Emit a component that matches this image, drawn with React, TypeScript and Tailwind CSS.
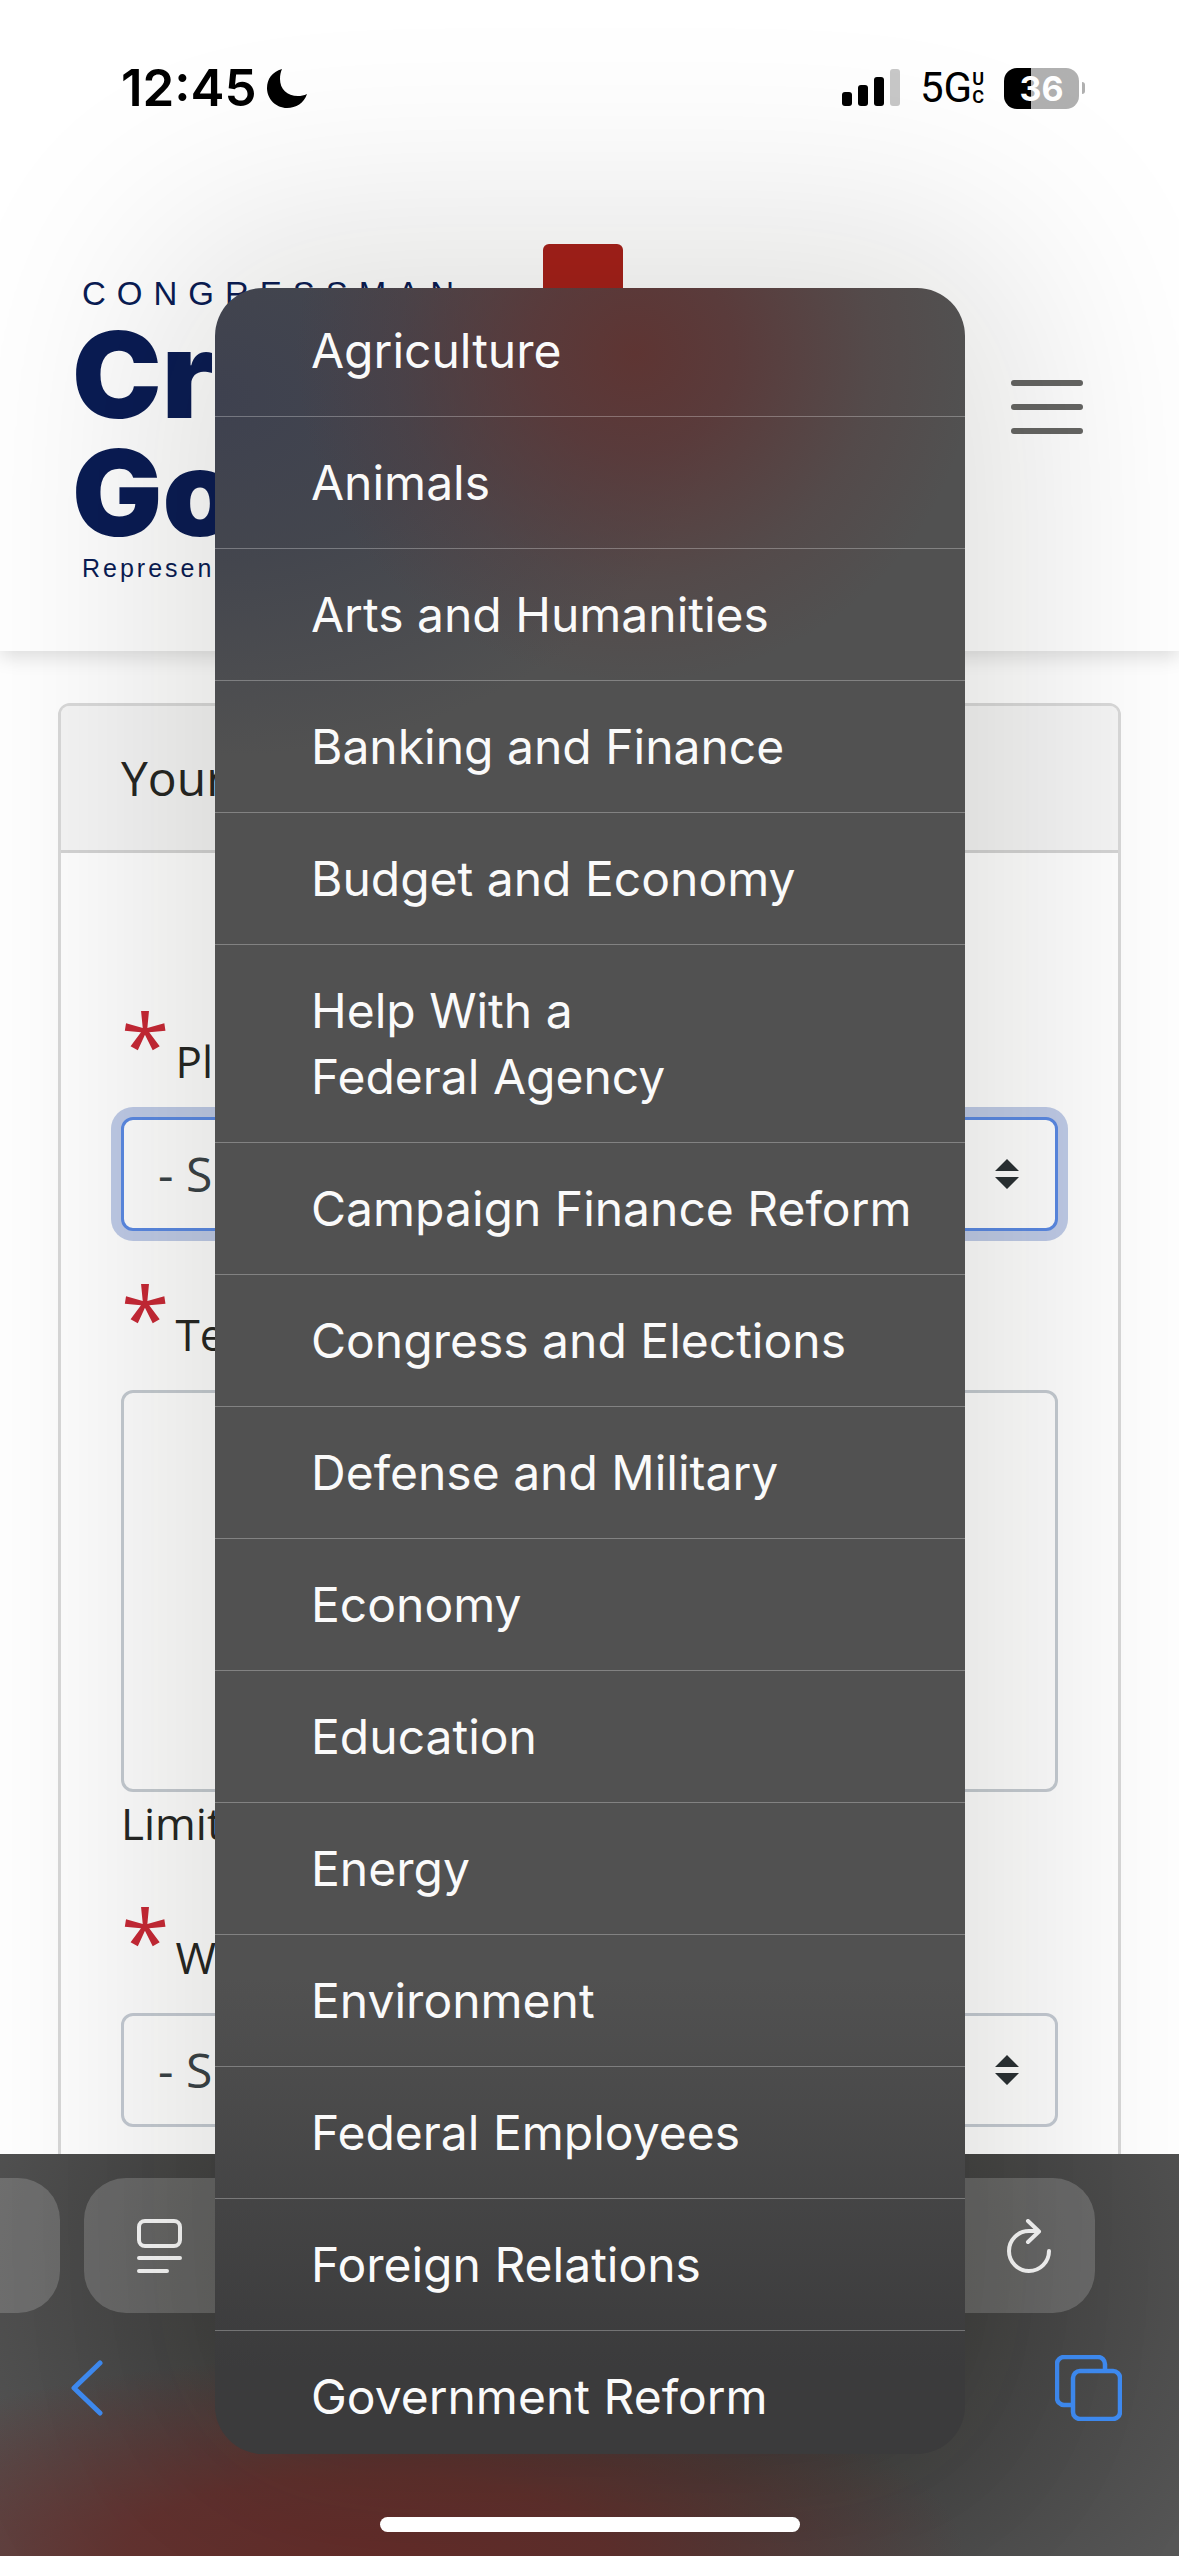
import React from 'react'

const topics = [
  'Agriculture',
  'Animals',
  'Arts and Humanities',
  'Banking and Finance',
  'Budget and Economy',
  'Help With a Federal Agency',
  'Campaign Finance Reform',
  'Congress and Elections',
  'Defense and Military',
  'Economy',
  'Education',
  'Energy',
  'Environment',
  'Federal Employees',
  'Foreign Relations',
  'Government Reform',
]

const StatusBar = () => (
  <div className="flex h-44 shrink-0 items-center justify-between pr-[94px] pl-[121px] text-black">
    <div className="flex items-center gap-2.5">
      <span className="font-['Inter',sans-serif] text-[51px] font-semibold">12:45</span>
      <svg className="h-10 w-10" viewBox="0 0 40 40" aria-hidden="true">
        <path d="M15 1C5 4 0 11 0 20c0 11 9 20 20 20 9 0 17-5 20-14-3 1.500-6 2-9 2-11 0-18-7-18-17 0-4 .7-7 2-10z" fill="#000" />
      </svg>
    </div>
    <div className="flex items-center font-['Roboto',sans-serif]">
      <svg className="h-10 w-[58px]" viewBox="0 0 58 40" aria-hidden="true">
        <rect x="0" y="24" width="10" height="14" rx="3" />
        <rect x="16" y="17" width="10" height="21" rx="3" />
        <rect x="32" y="9" width="10" height="29" rx="3" />
        <rect x="48" y="1" width="10" height="37" rx="3" fill="#c8c8c8" />
      </svg>
      <div className="ml-5 flex items-center">
        <span className="text-[42px] leading-none">5G</span>
        <span className="flex flex-col text-lg leading-[18px] font-semibold">
          <span>U</span>
          <span>C</span>
        </span>
      </div>
      <div className="ml-5 flex items-center gap-[3px]">
        <div className="flex h-[41px] w-[75px] items-center justify-center rounded-[13px] bg-linear-to-r from-black from-36% to-[#b0b0b0] to-36% font-['Inter',sans-serif] text-[34px] font-bold text-white">
          36
        </div>
        <div className="h-3 w-[3px] rounded-r-full bg-[#b0b0b0]" />
      </div>
    </div>
  </div>
)

const Header = () => (
  <header className="flex items-center justify-between bg-white pt-[51px] pr-24 pb-16 pl-15 shadow-[0_6px_18px_rgba(0,0,0,0.13)]">
    <svg className="h-[360px] w-[580px]" viewBox="0 0 580 360" role="img" aria-label="Congressman">
      <g fill="#0a1c54">
        <text x="22" y="78" className="font-['Liberation_Sans',sans-serif] text-[33px] tracking-[11px]">CONGRESSMAN</text>
        <text x="12" y="191" className="font-['Inter',sans-serif] text-[120px] font-black">Cr</text>
        <text x="12" y="309" className="font-['Inter',sans-serif] text-[120px] font-black">Go</text>
        <text x="22" y="350" className="font-['Liberation_Sans',sans-serif] text-[25px] tracking-[3px]">Represen</text>
      </g>
      <rect x="483" y="17" width="80" height="180" rx="6" fill="#a6201a" />
    </svg>
    <button type="button" aria-label="Open menu" className="flex w-[72px] flex-col gap-[18px]">
      <span className="h-1.5 rounded-full bg-[#666664]" />
      <span className="h-1.5 rounded-full bg-[#666664]" />
      <span className="h-1.5 rounded-full bg-[#666664]" />
    </button>
  </header>
)

interface FieldLabelProps {
  htmlFor: string
  children: React.ReactNode
}

const FieldLabel: React.FC<FieldLabelProps> = ({ htmlFor, children }) => (
  <label htmlFor={htmlFor} className="mb-[23px] flex items-baseline gap-1.5 text-[44px] leading-[66px]">
    <span className="text-[88px] leading-none font-medium text-[#c92936]">*</span>
    {children}
  </label>
)

interface SelectFieldProps {
  id: string
  active?: boolean
}

const SelectField: React.FC<SelectFieldProps> = ({ id, active }) => (
  <div className="relative">
    <select
      id={id}
      className={`h-[114px] w-full appearance-none rounded-xl border-3 bg-white px-[34px] text-5xl text-[#3a4347] outline-none ${
        active ? 'border-[#5b8ae4] ring-10 ring-[#c0cce8]' : 'border-[#c6ccd4]'
      }`}
    >
      <option>- S</option>
    </select>
    <svg className="pointer-events-none absolute top-[42px] right-[39px] h-[30px] w-6" viewBox="0 0 24 30" aria-hidden="true">
      <path d="M12 0l12 12H0zM12 30L0 18h24z" fill="#2a3134" />
    </svg>
  </div>
)

const ContactForm = () => (
  <main className="px-[58px] pt-[52px] font-['Open_Sans',sans-serif] text-[#262724]">
    <form className="rounded-xl border-3 border-[#dadada]">
      <h2 className="rounded-t-lg border-b-3 border-[#d4d4d4] bg-[#f6f6f6] px-15 py-9 text-5xl leading-[72px]">Your</h2>
      <div className="flex flex-col gap-[42px] px-15 pt-[147px] pb-15">
        <div>
          <FieldLabel htmlFor="topic">Pl</FieldLabel>
          <SelectField id="topic" active />
        </div>
        <div>
          <FieldLabel htmlFor="message">Te</FieldLabel>
          <textarea
            id="message"
            className="block h-[402px] w-full resize-none rounded-xl border-3 border-[#c6ccd2] p-9 text-5xl"
          />
          <p className="text-[44px] leading-[62px]">Limit</p>
        </div>
        <div>
          <FieldLabel htmlFor="response">W</FieldLabel>
          <SelectField id="response" />
        </div>
      </div>
    </form>
  </main>
)

const Toolbar = () => (
  <footer className="shrink-0 bg-[#565656] bg-[radial-gradient(ellipse_600px_200px_at_31%_100%,#652d2a_0%,#652d2ad9_40%,#652d2a00_100%),radial-gradient(ellipse_700px_480px_at_50%_30%,#353535_0%,#373736cc_45%,#37373600_100%)] pt-6 pb-6">
    <div className="flex gap-6 pr-21">
      <div className="h-[135px] w-15 rounded-r-[42px] bg-white/18" />
      <div className="flex h-[135px] flex-1 items-center justify-between rounded-[42px] bg-white/18 pr-11 pl-[53px] text-[#f8f8f8]">
        <button type="button" aria-label="Page settings">
          <svg className="h-[54px] w-[45px]" viewBox="0 0 45 54" fill="none" stroke="currentColor" strokeWidth="4" strokeLinecap="round">
            <rect x="2" y="2" width="41" height="25" rx="6" />
            <path d="M2 39h41M2 52h28" />
          </svg>
        </button>
        <button type="button" aria-label="Reload">
          <svg className="h-[54px] w-11" viewBox="0 0 44 54" fill="none" stroke="currentColor" strokeWidth="4" strokeLinecap="round" strokeLinejoin="round">
            <path d="M42 32A20 20 0 1 1 22 12h9M21 2l11 10.500L21 23" />
          </svg>
        </button>
      </div>
    </div>
    <div className="mt-[42px] flex h-[66px] items-center justify-between pr-[57px] pl-[71px] text-[#3f8cf4]">
      <button type="button" aria-label="Back">
        <svg className="h-14 w-8" viewBox="0 0 32 56" fill="none" stroke="currentColor" strokeWidth="5" strokeLinecap="round" strokeLinejoin="round">
          <path d="M29 3L3 28l26 25" />
        </svg>
      </button>
      <button type="button" aria-label="Tabs">
        <svg className="h-[66px] w-[67px]" viewBox="0 0 67 66" fill="none" stroke="currentColor" strokeWidth="4.500">
          <path d="M16 50H9a7 7 0 0 1-7-7V9a7 7 0 0 1 7-7h34a7 7 0 0 1 7 7v5" />
          <rect x="18" y="16" width="47" height="48" rx="7" />
        </svg>
      </button>
    </div>
    <div className="relative z-10 mx-auto mt-24 h-[15px] w-[420px] rounded-full bg-white" />
  </footer>
)

const TopicMenu = () => (
  <div className="absolute top-72 right-[214px] bottom-[102px] left-[215px] overflow-hidden rounded-[48px] bg-[#515151] bg-[radial-gradient(ellipse_340px_330px_at_56%_3%,#5e3533_0%,#5c3636cc_30%,#5c363640_70%,#5c363600_100%),radial-gradient(ellipse_500px_360px_at_0%_5%,#3e414f_0%,#40434dcc_45%,#51515100_100%),linear-gradient(#51515100_78%,#3b3b3c_96%)] shadow-[0_0_220px_60px_rgba(12,12,4,0.13)]">
    <ul className="-mt-[3px] divide-y divide-white/28">
      {topics.map((topic) => (
        <li key={topic}>
          <button
            type="button"
            className="w-full pt-[33px] pr-8 pb-8 pl-24 text-left font-['Inter',sans-serif] text-5xl leading-[66px] text-balance text-[#fafafa]"
          >
            {topic}
          </button>
        </li>
      ))}
    </ul>
  </div>
)

const App = () => {
  return (
    <div className="relative flex h-screen flex-col overflow-hidden bg-white">
      <StatusBar />
      <div className="min-h-0 flex-1 overflow-hidden">
        <Header />
        <ContactForm />
      </div>
      <Toolbar />
      <TopicMenu />
    </div>
  )
}

export default App
